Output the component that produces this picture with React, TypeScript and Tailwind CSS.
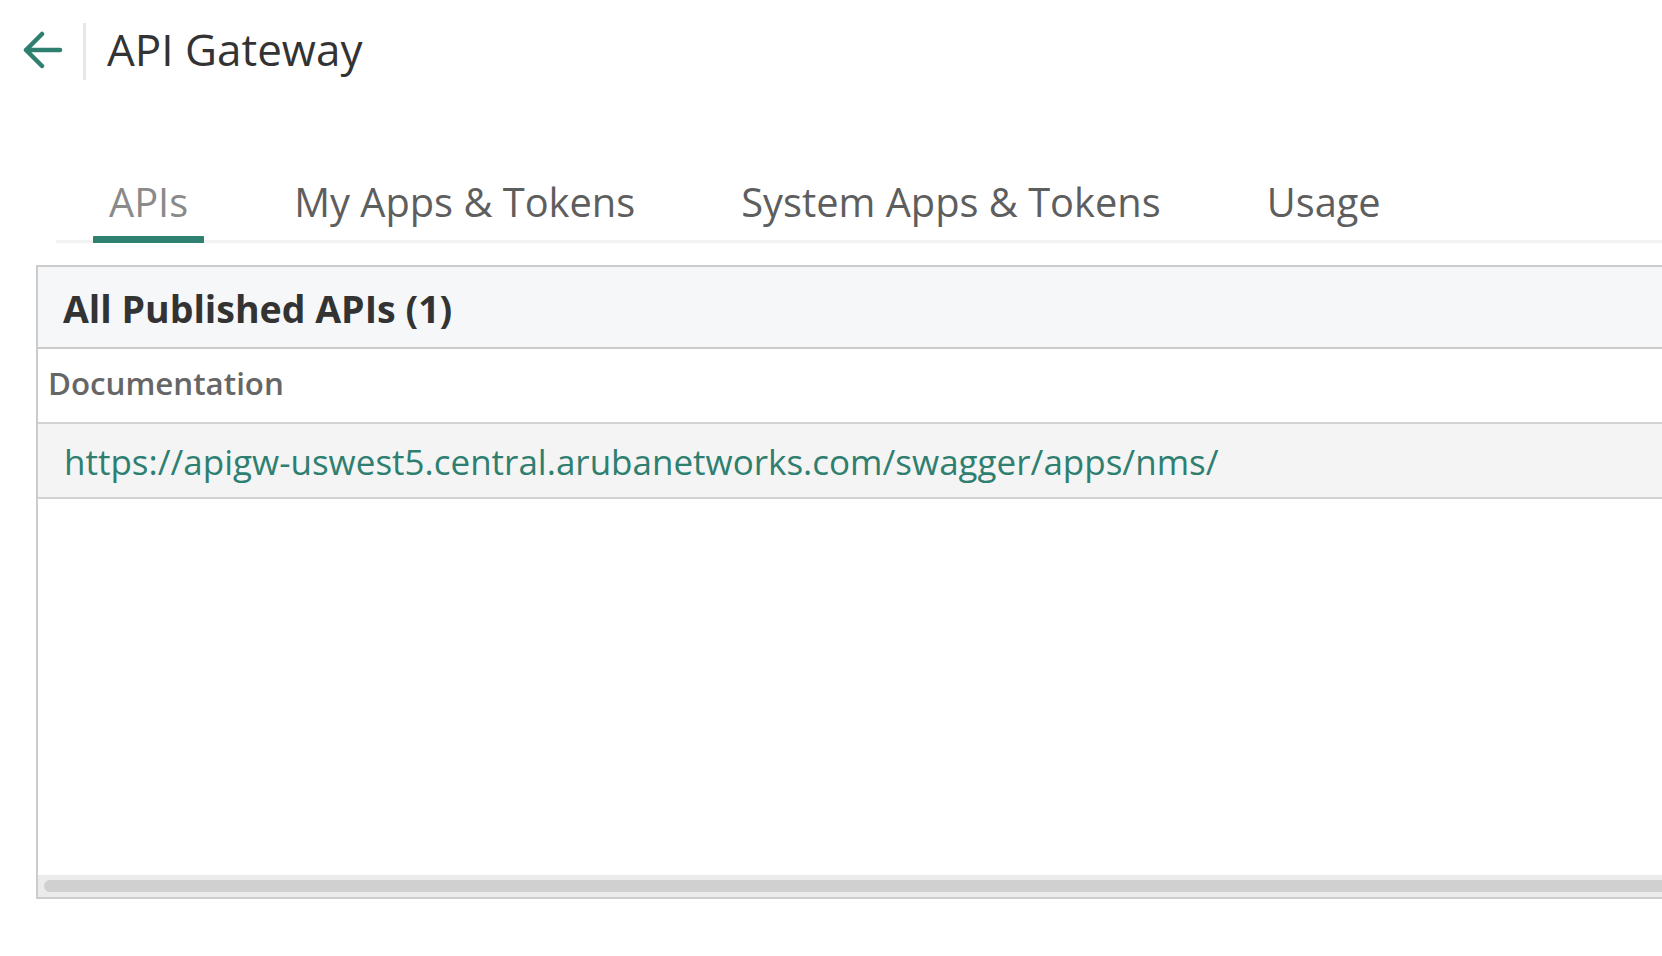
import React from "react";

export default function App() {
  const tabs = ["APIs", "My Apps & Tokens", "System Apps & Tokens", "Usage"];
  return (
    <div
      className="w-[1662px] h-[956px] overflow-hidden bg-white"
      style={{ fontFamily: '"Open Sans", "Liberation Sans", sans-serif' }}
    >
      {/* Header */}
      <div className="mt-[23px] flex h-[57px] items-center pl-[23px]">
        <svg width="40" height="38" viewBox="0 0 40 38" fill="none" className="mt-[-4px]">
          <path
            d="M3 19H37M19 3L3 19L19 35"
            stroke="#2f7f70"
            strokeWidth="4.5"
            strokeLinecap="round"
            strokeLinejoin="round"
          />
        </svg>
        <div className="ml-[20px] h-[57px] w-[3px] bg-[#e8e8e8]" />
        <h1 className="ml-[21px] -mt-[6px] text-[44px] font-medium leading-[44px] text-[#333333]">API Gateway</h1>
      </div>

      {/* Tabs */}
      <div className="ml-[56px] mt-[102px] flex border-b-[3px] border-[#f2f2f2] pl-[37px]">
        {tabs.map((t, i) => (
          <div
            key={t}
            className={
              "relative px-4 pb-[18px] text-[39.8px] font-normal leading-[40px] whitespace-nowrap " +
              (i === 0 ? "text-[#8a8a8a]" : "text-[#5e5e5e] ml-[74px]")
            }
          >
            {t}
            {i === 0 && (
              <div className="absolute bottom-[-3px] left-0 right-0 h-[7px] bg-[#2f8070] rounded-t-[1px]" />
            )}
          </div>
        ))}
      </div>

      {/* Table */}
      <div className="ml-[36px] mt-[22px] w-[1650px] border-[2px] border-[#cccccc]">
        <div className="h-[82px] border-b-[2px] border-[#cccccc] bg-[#f6f7f9] pl-[25px] pt-[23px] text-[37.5px] font-bold leading-[38px] text-[#333333]">
          All Published APIs (1)
        </div>
        <div className="h-[75px] border-b-[2px] border-[#d2d2d0] bg-white pl-[10px] pt-[18px] text-[31.3px] font-semibold leading-[32px] text-[#666666]">
          Documentation
        </div>
        <div className="h-[75px] border-b-[2px] border-[#d2d2d0] bg-[#f4f4f4] pl-[26px] pt-[20px] text-[35px] leading-[35px] text-[#2e7f70]">
          https://apigw-uswest5.central.arubanetworks.com/swagger/apps/nms/
        </div>
        <div className="h-[376px] bg-white" />
        <div className="flex h-[22px] items-center bg-[#ebebeb] pl-[6px]">
          <div className="h-[12px] flex-1 rounded-l-full bg-[#d0d0d0]" />
        </div>
      </div>
    </div>
  );
}
